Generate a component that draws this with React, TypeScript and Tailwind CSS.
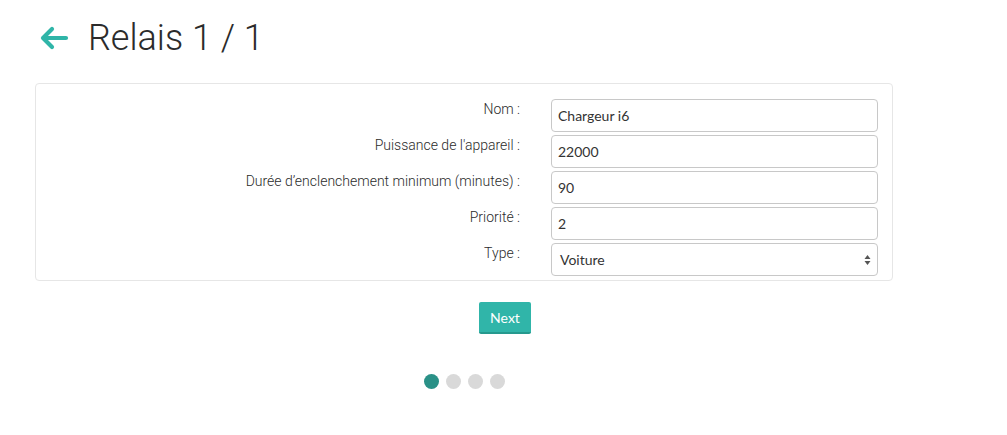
import React from 'react';

// champs du formulaire relais
const fields = [
  { label: 'Nom :', value: 'Chargeur i6' },
  { label: "Puissance de l'appareil :", value: '22000' },
  { label: 'Durée d’enclenchement minimum (minutes) :', value: '90' },
  { label: 'Priorité :', value: '2' },
];

const BackArrow = () => (
  <svg width="30" height="24" viewBox="0 0 30 24" fill="none">
    <path
      d="M27 12H4M13 3L4 12L13 21"
      stroke="#2fb5a8"
      strokeWidth="4.2"
      strokeLinecap="round"
      strokeLinejoin="round"
    />
  </svg>
);

const Row = ({ label, children }: { label: string; children: React.ReactNode }) => (
  <div className="flex items-start">
    <div className="w-[484px] text-right text-[14px] font-light leading-[18px] pt-[1px] text-[#2b2b2b]">{label}</div>
    <div className="ml-[31px] w-[327px]">{children}</div>
  </div>
);

export default function App() {
  return (
    <div className="w-[1007px] h-[435px] bg-white font-['Roboto',sans-serif]">
      {/* en-tête */}
      <div className="flex items-center pt-[12px] pl-[39px] h-[64px]">
        <BackArrow />
        <h1 className="ml-[19px] text-[36px] font-light text-[#2b2b2b] leading-none">Relais 1 / 1</h1>
      </div>

      {/* carte formulaire */}
      <div className="ml-[35px] mt-[19px] w-[858px] border border-[#e6e6e6] rounded-[4px] pt-[15px] pb-[4px] flex flex-col gap-[3px]">
        {fields.map((f) => (
          <Row key={f.label} label={f.label}>
            <div className="h-[33px] border border-[#c8c8c8] rounded-[4px] flex items-center pl-[6px] font-['Lato',sans-serif] text-[14px] text-[#333]">
              {f.value}
            </div>
          </Row>
        ))}
        <Row label="Type :">
          <div className="h-[33px] border border-[#c8c8c8] rounded-[4px] flex items-center justify-between pl-[8px] pr-[6px] font-['Lato',sans-serif] text-[14px] text-[#333]">
            <span>Voiture</span>
            <svg width="7" height="12" viewBox="0 0 7 12">
              <path d="M3.5 1L6.5 5H0.5Z" fill="#555" />
              <path d="M3.5 11L6.5 7H0.5Z" fill="#555" />
            </svg>
          </div>
        </Row>
      </div>

      {/* bouton */}
      <div className="flex justify-center mt-[21px] pl-[3px]">
        <button className="w-[52px] h-[32px] bg-[#30b5a9] border-b-2 border-[#26998e] rounded-[2px] text-white text-[14px] font-['Lato',sans-serif]">
          Next
        </button>
      </div>

      {/* pagination */}
      <div className="ml-[35px] w-[858px] flex justify-center gap-[7px] mt-[40px]">
        <span className="w-[15px] h-[15px] rounded-full bg-[#2a9187]" />
        <span className="w-[15px] h-[15px] rounded-full bg-[#d9d9d9]" />
        <span className="w-[15px] h-[15px] rounded-full bg-[#d9d9d9]" />
        <span className="w-[15px] h-[15px] rounded-full bg-[#d9d9d9]" />
      </div>
    </div>
  );
}
